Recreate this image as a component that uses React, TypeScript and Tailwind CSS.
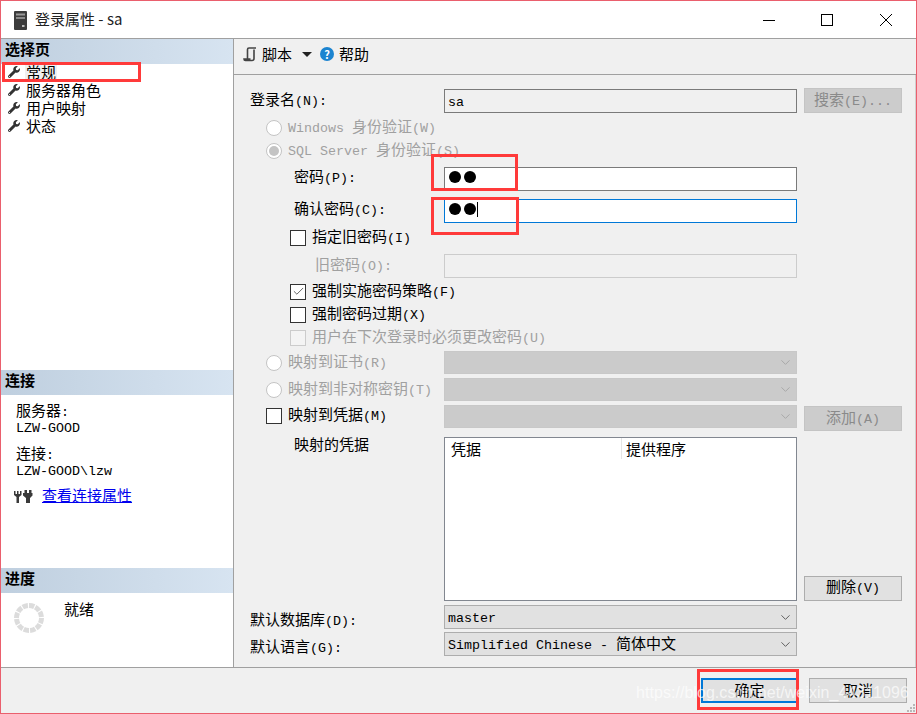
import React from 'react'
import { FaWrench } from 'react-icons/fa'
import { ChevronDown, Check } from 'lucide-react'

const zh = "font-['Noto_Sans_CJK_SC','Liberation_Sans',sans-serif]"

// the dialog font is half-width latin next to 15px CJK, so runs get split
function T({ children }: { children: string }) {
  const parts = children.split(/([\u0000-\u007f]+)/).filter(Boolean)
  return (
    <span className="-mt-[2px] whitespace-pre leading-none">
      {parts.map((p, i) =>
        /^[\u0000-\u007f]/.test(p) ? (
          <span key={i} className="font-['Liberation_Mono',monospace] text-[13.33px]">{p}</span>
        ) : (
          <span key={i} className={`${zh} text-[15px]`}>{p}</span>
        )
      )}
    </span>
  )
}

function SectionHeader({ children }: { children: string }) {
  return (
    <div className={`${zh} flex h-[25px] items-center bg-gradient-to-r from-[#bfcfdf] to-[#d7e4f1] pb-[4px] pl-[4px] text-[15px] font-bold text-black`}>
      {children}
    </div>
  )
}

function NavItem({ label, active }: { label: string; active?: boolean }) {
  return (
    <div className="flex h-[18px] items-center pl-[7px] text-black">
      <FaWrench className="h-[12px] w-[12px] text-[#333]" />
      <span className={`ml-[5px] flex h-[16px] items-center px-[1px] ${active ? 'bg-[#f0f0f0]' : ''}`}>
        <T>{label}</T>
      </span>
    </div>
  )
}

function Radio({ checked }: { checked?: boolean }) {
  return (
    <span className="flex h-[16px] w-[16px] shrink-0 items-center justify-center rounded-full border border-[#c4c4c4] bg-white">
      {checked && <span className="h-[10px] w-[10px] rounded-full bg-[#c4c4c4]" />}
    </span>
  )
}

function CheckBox({ checked, disabled }: { checked?: boolean; disabled?: boolean }) {
  return (
    <span className={`flex h-[16px] w-[16px] shrink-0 items-center justify-center border ${disabled ? 'border-[#ccc] bg-[#f4f4f4]' : 'border-[#333] bg-white'}`}>
      {checked && <Check className="h-[13px] w-[13px] text-[#444]" strokeWidth={1.5} />}
    </span>
  )
}

function Select({ value, disabled }: { value?: string; disabled?: boolean }) {
  return (
    <div className={`flex h-full w-[353px] items-center justify-between border pl-[3px] pr-[3px] ${disabled ? 'border-[#c8c8c8] bg-[#cbcbcb]' : 'border-[#adadad] bg-[#e1e1e1]'}`}>
      <span className="flex items-center text-black">{value && <T>{value}</T>}</span>
      <ChevronDown className={`h-[15px] w-[15px] ${disabled ? 'text-[#a5a5a5]' : 'text-[#555]'}`} strokeWidth={1.5} />
    </div>
  )
}

function Dots({ caret }: { caret?: boolean }) {
  return (
    <div className="-mt-[4px] flex items-center gap-[3px] pl-[4px]">
      <span className="h-[12px] w-[12px] rounded-full bg-black" />
      <span className="h-[12px] w-[12px] rounded-full bg-black" />
      {caret && <span className="-ml-[2px] h-[15px] w-px bg-black" />}
    </div>
  )
}

function Btn({ label, disabled, primary, w = 'w-[98px]' }: { label: string; disabled?: boolean; primary?: boolean; w?: string }) {
  return (
    <div
      className={`flex h-[25px] ${w} items-center justify-center ${
        primary
          ? 'border-2 border-[#0078d7] bg-[#e1e1e1] pb-[2px] text-black'
          : disabled
            ? 'border border-[#c4c4c4] bg-[#cccccc] text-[#8a8a8a]'
            : 'border border-[#adadad] bg-[#e1e1e1] pb-[2px] text-black'
      }`}
    >
      <T>{label}</T>
    </div>
  )
}

// label column runs from x=234 to the controls at x=444
function Row({ h, mt, pl, children, control }: { h: string; mt: string; pl: string; children?: React.ReactNode; control?: React.ReactNode }) {
  return (
    <div className={`flex ${h} ${mt} shrink-0`}>
      <div className={`flex w-[210px] shrink-0 items-center ${pl}`}>{children}</div>
      {control}
    </div>
  )
}

const muted = 'flex items-center text-[#a0a0a0]'
const plain = 'flex items-center'

export default function App() {
  return (
    <div className={`${zh} relative flex h-[714px] w-[917px] flex-col overflow-hidden border border-[#ea5f6d] bg-[#f0f0f0] text-black`}>
      {/* title bar */}
      <div className="flex h-[38px] shrink-0 items-center border-b border-[#a0a0a0] bg-white">
        <svg className="ml-[13px] mt-[1px]" width="13" height="19" viewBox="0 0 13 19">
          <rect x="0" y="0" width="13" height="19" rx="1" fill="#3c3c3c" />
          <rect x="2" y="2.5" width="9" height="2" fill="#9a9a9a" />
          <rect x="2" y="6" width="9" height="2" fill="#8a8a8a" />
          <rect x="8" y="14" width="2.5" height="2" fill="#bbb" />
        </svg>
        <span className={`${zh} ml-[8px] text-[15px] text-[#222]`}>登录属性 - sa</span>
        <div className="ml-auto mr-[23px] flex items-center">
          <svg width="14" height="14" viewBox="0 0 14 14" className="mr-[44px]">
            <path d="M1 7.5h12" stroke="#000" strokeWidth="1" />
          </svg>
          <svg width="14" height="14" viewBox="0 0 14 14" className="mr-[45px]">
            <rect x="1.5" y="1.5" width="11" height="11" fill="none" stroke="#000" />
          </svg>
          <svg width="14" height="14" viewBox="0 0 14 14">
            <path d="M1 1l12 12M13 1L1 13" stroke="#000" strokeWidth="1" />
          </svg>
        </div>
      </div>

      <div className="flex min-h-0 flex-1">
        {/* left pane */}
        <aside className="flex w-[233px] shrink-0 flex-col border-r border-[#a0a0a0] bg-white">
          <SectionHeader>选择页</SectionHeader>
          <div className="-mt-px flex h-[307px] shrink-0 flex-col">
            <NavItem label="常规" active />
            <NavItem label="服务器角色" />
            <NavItem label="用户映射" />
            <NavItem label="状态" />
          </div>
          <SectionHeader>连接</SectionHeader>
          <div className="flex h-[173px] shrink-0 flex-col pl-[15px] pt-[8px]">
            <div className="flex h-[16px] items-center"><T>服务器:</T></div>
            <div className="flex h-[16px] items-center"><T>LZW-GOOD</T></div>
            <div className="mt-[11px] flex h-[16px] items-center"><T>连接:</T></div>
            <div className="flex h-[16px] items-center"><T>LZW-GOOD\lzw</T></div>
            <div className="mt-[9px] flex h-[18px] items-center">
              <svg width="19" height="14" viewBox="0 0 19 14" className="-ml-[2px]">
                <path d="M0 2v4l2.5 2v6h2.5V8L7.5 6V2H6v3H4.5V2H3v3H1.5V2zM9 4h9.5v2.5L16 9v5h-4V9L9 6.5zM10.5 1H13v3h-2.5zM15 1h2.5v3H15z" fill="#3a3a3a" />
              </svg>
              <span className={`${zh} -mt-[3px] ml-[9px] text-[15px] leading-[18px] text-[#0000ee] underline`}>查看连接属性</span>
            </div>
          </div>
          <SectionHeader>进度</SectionHeader>
          <div className="flex flex-1 items-start pl-[12px] pt-[9px]">
            <svg width="32" height="32" viewBox="0 0 32 32">
              <circle cx="16" cy="16" r="12.5" fill="none" stroke="#dcdcdc" strokeWidth="5" strokeDasharray="5.4 1.1" />
            </svg>
            <span className="ml-[19px] mt-[-2px] flex h-[18px] items-center"><T>就绪</T></span>
          </div>
        </aside>

        {/* right pane */}
        <main className="flex min-w-0 flex-1 flex-col">
          <div className="flex h-[36px] shrink-0 items-center border-b border-[#a0a0a0] pb-[5px] pl-[9px]">
            <svg width="15" height="15" viewBox="0 0 15 15">
              <path d="M4.5 12V2.5A1.5 1.5 0 0 1 6 1h7M11 2.5V11.5a2 2 0 0 1-2 2H2.5A1.5 1.5 0 0 1 1 12h6.5" fill="none" stroke="#444" strokeWidth="1.6" />
            </svg>
            <span className={`${zh} ml-[4px] text-[15px]`}>脚本</span>
            <span className="ml-[10px] h-0 w-0 border-x-[5px] border-t-[5px] border-x-transparent border-t-[#222]" />
            <span className="ml-[8px] flex h-[14px] w-[14px] items-center justify-center rounded-full bg-[#1c84d0] text-[11px] font-bold leading-none text-white">?</span>
            <span className={`${zh} ml-[5px] text-[15px]`}>帮助</span>
          </div>

          <div className="flex flex-1 flex-col border-r border-[#d0d0d0]">
            <Row h="h-[24px]" mt="mt-[14px]" pl="pb-[2px] pl-[16px]" control={
              <>
                <div className="flex h-full w-[353px] items-center border border-[#7a7a7a] bg-[#f0f0f0] pl-[3px]"><T>sa</T></div>
                <div className="ml-[7px] -mt-px"><Btn label="搜索(E)..." disabled /></div>
              </>
            }>
              <T>登录名(N):</T>
            </Row>
            <Row h="h-[23px]" mt="mt-[3px]" pl="pl-[32px]">
              <Radio />
              <span className={`ml-[6px] ${muted}`}><T>Windows 身份验证(W)</T></span>
            </Row>
            <Row h="h-[23px]" mt="mt-0" pl="pl-[32px]">
              <Radio checked />
              <span className={`ml-[6px] ${muted}`}><T>SQL Server 身份验证(S)</T></span>
            </Row>
            <Row h="h-[24px]" mt="mt-[5px]" pl="pb-[4px] pl-[60px]" control={
              <div className="flex h-full w-[353px] items-center border border-[#7a7a7a] bg-white"><Dots /></div>
            }>
              <T>密码(P):</T>
            </Row>
            <Row h="h-[24px]" mt="mt-[8px]" pl="pb-[4px] pl-[60px]" control={
              <div className="flex h-full w-[353px] items-center border border-[#0078d7] bg-white"><Dots caret /></div>
            }>
              <T>确认密码(C):</T>
            </Row>
            <Row h="h-[23px]" mt="mt-[3px]" pl="pl-[56px]">
              <CheckBox />
              <span className={`ml-[6px] ${plain}`}><T>指定旧密码(I)</T></span>
            </Row>
            <Row h="h-[24px]" mt="mt-[5px]" pl="pb-[2px] pl-[81px]" control={
              <div className="h-full w-[353px] border border-[#ccc] bg-[#f0f0f0]" />
            }>
              <span className={muted}><T>旧密码(O):</T></span>
            </Row>
            <Row h="h-[23px]" mt="mt-[2px]" pl="pl-[56px]">
              <CheckBox checked />
              <span className={`ml-[6px] ${plain}`}><T>强制实施密码策略(F)</T></span>
            </Row>
            <Row h="h-[23px]" mt="mt-0" pl="pl-[56px]">
              <CheckBox />
              <span className={`ml-[6px] ${plain}`}><T>强制密码过期(X)</T></span>
            </Row>
            <Row h="h-[23px]" mt="mt-0" pl="pl-[56px]">
              <CheckBox disabled />
              <span className={`ml-[6px] ${muted}`}><T>用户在下次登录时必须更改密码(U)</T></span>
            </Row>
            <Row h="h-[23px]" mt="mt-[2px]" pl="pl-[32px]" control={<Select disabled />}>
              <Radio />
              <span className={`ml-[6px] ${muted}`}><T>映射到证书(R)</T></span>
            </Row>
            <Row h="h-[23px]" mt="mt-[4px]" pl="pl-[32px]" control={<Select disabled />}>
              <Radio />
              <span className={`ml-[6px] ${muted}`}><T>映射到非对称密钥(T)</T></span>
            </Row>
            <Row h="h-[23px]" mt="mt-[4px]" pl="pb-[2px] pl-[32px]" control={
              <>
                <Select disabled />
                <div className="ml-[7px] mt-px"><Btn label="添加(A)" disabled /></div>
              </>
            }>
              <CheckBox />
              <span className={`ml-[6px] ${plain}`}><T>映射到凭据(M)</T></span>
            </Row>
            <div className="mt-[9px] flex h-[164px] shrink-0">
              <div className="flex h-[14px] w-[210px] shrink-0 items-center pl-[60px]"><T>映射的凭据</T></div>
              <div className="h-full w-[353px] border border-[#828790] bg-white">
                <div className="flex h-[21px] items-center">
                  <span className="flex h-full w-[177px] items-center border-r border-[#e5e5e5] pl-[6px]"><T>凭据</T></span>
                  <span className="flex items-center pl-[4px]"><T>提供程序</T></span>
                </div>
              </div>
              <div className="ml-[7px] self-end"><Btn label="删除(V)" /></div>
            </div>
            <Row h="h-[24px]" mt="mt-[4px]" pl="pt-[6px] pl-[16px]" control={<Select value="master" />}>
              <T>默认数据库(D):</T>
            </Row>
            <Row h="h-[24px]" mt="mt-[3px]" pl="pt-[6px] pl-[16px]" control={<Select value="Simplified Chinese - 简体中文" />}>
              <T>默认语言(G):</T>
            </Row>
          </div>
        </main>
      </div>

      {/* button bar */}
      <div className="flex h-[46px] shrink-0 items-start justify-end border-t border-[#a0a0a0] pr-[9px] pt-[10px]">
        <Btn label="确定" primary w="w-[97px]" />
        <div className="ml-[11px]"><Btn label="取消" /></div>
      </div>

      {/* screenshot annotations */}
      <div className="absolute left-[1px] top-[61px] h-[20px] w-[139px] border-[3px] border-[#ff3a3a]" />
      <div className="absolute left-[430px] top-[153px] h-[37px] w-[87px] border-[3px] border-[#ff3a3a]" />
      <div className="absolute left-[430px] top-[196px] h-[38px] w-[88px] border-[3px] border-[#ff3a3a]" />
      <div className="absolute left-[696px] top-[668px] h-[41px] w-[102px] border-[3px] border-[#ff3a3a]" />
      <div className="absolute left-[635px] top-[682px] font-['Liberation_Sans',sans-serif] text-[16px] leading-[20px] tracking-[0.05px] text-white/70">
        https://blog.csdn.net/weixin_44311096
      </div>
      <svg className="absolute bottom-0 right-0" width="10" height="10" viewBox="0 0 10 10">
        <path d="M7 1h2v2H7zM4 4h2v2H4zM7 4h2v2H7zM1 7h2v2H1zM4 7h2v2H4zM7 7h2v2H7z" fill="#b8b8b8" />
      </svg>
    </div>
  )
}
